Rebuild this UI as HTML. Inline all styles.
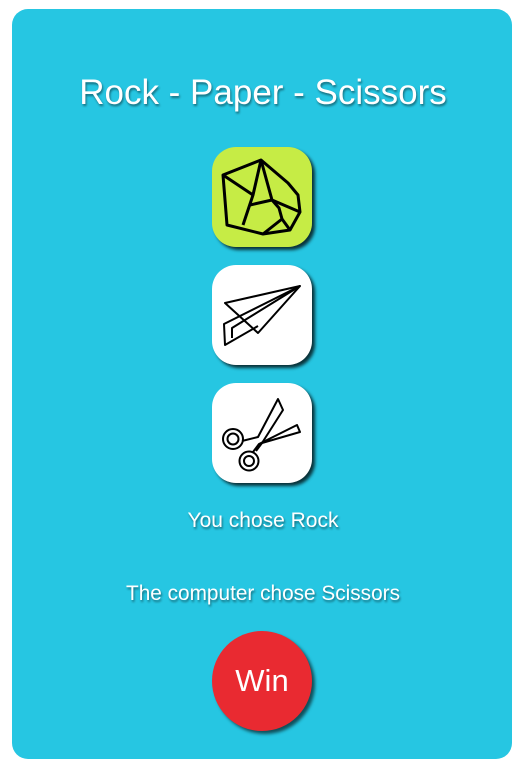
<!DOCTYPE html>
<html><head><style>
html,body{margin:0;padding:0;background:#fff;width:526px;height:775px;overflow:hidden}
.card{position:absolute;left:12px;top:9px;width:500px;height:750px;background:#26c6e2;border-radius:16px}
.t{position:absolute;left:0;width:526px;text-align:center;color:#fff;font-family:"Liberation Sans",Arial,sans-serif;text-shadow:1px 2px 2px rgba(0,0,0,.45);white-space:nowrap}
.btn{position:absolute;left:212px;width:100px;height:100px;border-radius:24px;background:#fff;box-shadow:3px 3px 3px rgba(0,0,0,.75)}
.btn svg{position:absolute;left:0;top:0}
.win{position:absolute;left:212px;top:631px;width:100px;height:100px;border-radius:50%;background:#e92a31;box-shadow:3px 3px 3px rgba(0,0,0,.6);color:#fff;font:31px "Liberation Sans",Arial,sans-serif;text-align:center;line-height:100px}
</style></head><body>
<div class="card"></div>
<div class="t" style="top:73px;font-size:35px">Rock - Paper - Scissors</div>
<div class="btn" style="top:147px;background:#c6ec45">
<svg width="100" height="100" viewBox="212 147 100 100" fill="none" stroke="#000" stroke-width="3" stroke-linejoin="round">
<path d="M261 160 L223 175 L227 225 L263 234 L290 230 L300 212 L298 195 L288 183 Z"/>
<path d="M223 175 L253 195"/>
<path d="M261 160 L253 195 L243 225"/>
<path d="M261 160 L272 200 L300 212"/>
<path d="M250 205 L272 200 L279 208 L282 219 L263 234"/>
<path d="M282 219 L290 230"/>
</svg></div>
<div class="btn" style="top:265px">
<svg width="100" height="100" viewBox="212 265 100 100" fill="none" stroke="#000" stroke-width="2" stroke-linejoin="round">
<path d="M300 286 L225 303 L258 333 Z"/>
<path d="M300 286 L224 324 L225 345 L258 326"/>
<path d="M300 286 L232 328 L232 338"/>
</svg></div>
<div class="btn" style="top:383px">
<svg width="100" height="100" viewBox="212 383 100 100" fill="none" stroke="#000" stroke-width="2" stroke-linejoin="round">
<circle cx="233" cy="439" r="10"/><circle cx="233" cy="439" r="5.5"/>
<circle cx="249" cy="461" r="9.5"/><circle cx="249" cy="461" r="5"/>
<path d="M242 441 L258 437 L278 399 L283 410 L262 443 L256 451"/>
<path d="M253 452 L259 444 L297 425 L300 432 L262 443"/>
</svg></div>
<div class="t" style="top:509px;font-size:21px">You chose Rock</div>
<div class="t" style="top:582px;font-size:20.8px">The computer chose Scissors</div>
<div class="win">Win</div>
</body></html>
